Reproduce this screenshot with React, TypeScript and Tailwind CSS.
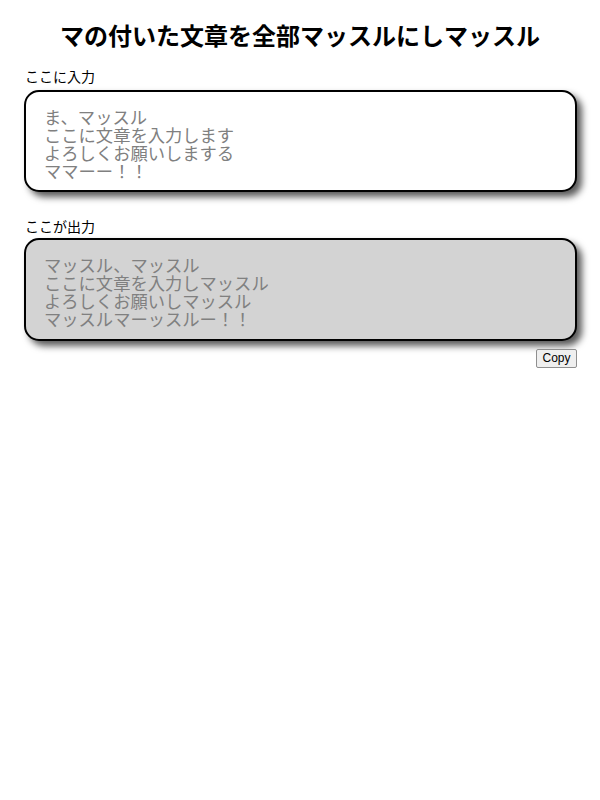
import React from "react";

const jp = { fontFamily: '"Noto Sans CJK JP", "Noto Sans", sans-serif' };

export default function App() {
  const input = "ま、マッスル\nここに文章を入力します\nよろしくお願いしまする\nママーー！！";
  const output = "マッスル、マッスル\nここに文章を入力しマッスル\nよろしくお願いしマッスル\nマッスルマーッスルー！！";
  return (
    <div className="bg-white min-h-[800px] w-[600px] text-black" style={jp}>
      <h1 className="mt-[19px] text-center text-[24px] font-bold leading-[32px]">
        マの付いた文章を全部マッスルにしマッスル
      </h1>
      <div className="ml-[24px] w-[553px]">
        <div className="mt-[15px] mb-[4px] pl-[1px] text-[14px] leading-[20px]">ここに入力</div>
        <div className="h-[102px] rounded-[15px] border-2 border-black bg-white pl-[18px] pt-[16px] text-[17.3px] leading-[18px] text-[#808080] whitespace-pre shadow-[5px_5px_7px_rgba(0,0,0,0.65)]">
          {input}
        </div>
        <div className="mt-[24px] mb-[2px] pl-[1px] text-[14px] leading-[20px]">ここが出力</div>
        <div className="h-[103px] rounded-[15px] border-2 border-black bg-[#d3d3d3] pl-[18px] pt-[16px] text-[17.3px] leading-[18px] text-[#808080] whitespace-pre shadow-[5px_5px_7px_rgba(0,0,0,0.65)]">
          {output}
        </div>
        <div className="mt-[8px] flex justify-end">
          <button
            className="h-[19px] w-[41px] border border-[#8f8f8f] bg-[#efefef] rounded-[2px] text-[12px] leading-[15px] text-black"
            style={{ fontFamily: '"Liberation Sans", Arial, sans-serif' }}
          >
            Copy
          </button>
        </div>
      </div>
    </div>
  );
}
